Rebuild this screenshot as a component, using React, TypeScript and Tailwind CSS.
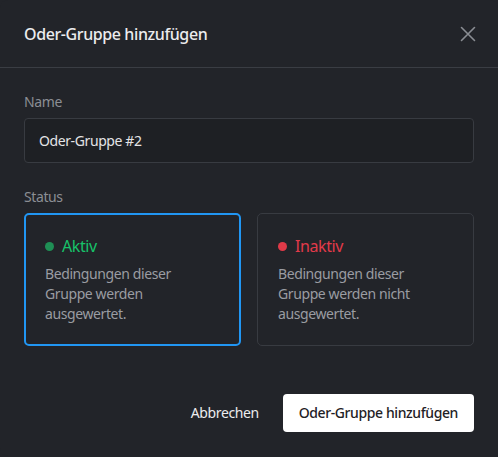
import { useState } from "react";

type StatusValue = "active" | "inactive";

const font = { fontFamily: '"Noto Sans", "Open Sans", sans-serif' };

function CloseIcon() {
  return (
    <svg width="16" height="16" viewBox="0 0 16 16" fill="none" stroke="currentColor" strokeWidth="1.6" strokeLinecap="round">
      <path d="M1.5 1.5l13 13M14.5 1.5l-13 13" />
    </svg>
  );
}

interface StatusCardProps {
  selected: boolean;
  title: string;
  description: string;
  dot: string;
  text: string;
  onClick: () => void;
}

function StatusCard({ selected, title, description, dot, text, onClick }: StatusCardProps) {
  return (
    <button
      type="button"
      onClick={onClick}
      className={
        "flex flex-col items-start rounded-[5px] border p-5 text-left " +
        (selected ? "border-[#2196f3] border-2 p-[19px]" : "border-[#383b41]")
      }
    >
      <div className="flex items-center gap-2">
        <span className={"h-[9px] w-[9px] rounded-full " + dot} />
        <span className={"text-base leading-6 " + text}>{title}</span>
      </div>
      <p className="mt-1.5 text-sm leading-5 text-[#9a9ca2]">{description}</p>
    </button>
  );
}

export default function App() {
  const [name, setName] = useState("Oder-Gruppe #2");
  const [status, setStatus] = useState<StatusValue>("active");

  return (
    <div className="min-h-screen bg-[#222429] tracking-[-0.4px]" style={font}>
      <div className="rounded-lg bg-[#222429]">
        <div className="flex h-[68px] items-center justify-between border-b border-[#3a3d43] px-6">
          <h2 className="text-base font-medium text-[#ececee]">Oder-Gruppe hinzufügen</h2>
          <button type="button" className="text-[#8a8d93] -mr-0.5">
            <CloseIcon />
          </button>
        </div>

        <div className="px-6 pt-6 pb-6">
          <label className="block text-sm leading-5 text-[#8b8e94]">Name</label>
          <input
            value={name}
            onChange={(e) => setName(e.target.value)}
            className="mt-1.5 h-[45px] w-full rounded-[4px] border border-[#383b41] bg-[#1e2024] px-3.5 text-sm tracking-[-0.4px] text-[#e4e4e6] outline-none"
          />

          <div className="mt-6 text-sm leading-5 text-[#8b8e94]">Status</div>
          <div className="mt-1.5 grid h-[133px] grid-cols-2 gap-4">
            <StatusCard
              selected={status === "active"}
              title="Aktiv"
              description="Bedingungen dieser Gruppe werden ausgewertet."
              dot="bg-[#1f8f55]"
              text="text-[#17c26a]"
              onClick={() => setStatus("active")}
            />
            <StatusCard
              selected={status === "inactive"}
              title="Inaktiv"
              description="Bedingungen dieser Gruppe werden nicht ausgewertet."
              dot="bg-[#e03a48]"
              text="text-[#e23a4a]"
              onClick={() => setStatus("inactive")}
            />
          </div>
        </div>

        <div className="flex justify-end gap-2 px-6 pt-6 pb-6">
          <button type="button" className="h-[38px] rounded-[4px] px-4 text-sm text-[#ececee]">
            Abbrechen
          </button>
          <button type="button" className="h-[38px] rounded-[4px] bg-white px-4 text-sm font-medium text-[#1f2125]">
            Oder-Gruppe hinzufügen
          </button>
        </div>
      </div>
    </div>
  );
}
